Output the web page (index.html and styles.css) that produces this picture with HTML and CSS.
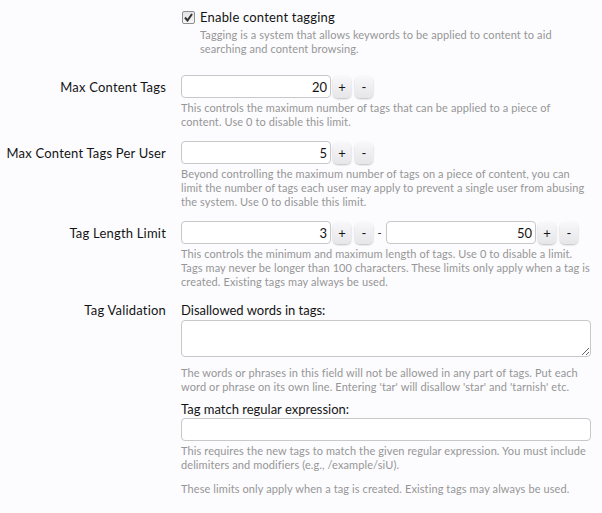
FILE: index.html
```html
<!DOCTYPE html>
<html lang="en">
<head>
    <meta charset="UTF-8">
    <title>Tagging Options</title>
    <link rel="stylesheet" href="styles.css">
</head>
<body>
    <form class="options">
        <dl class="ctrl-unit first">
            <dt></dt>
            <dd>
                <label class="check">
                    <span class="box">
                        <svg width="9" height="9" viewBox="0 0 9 9"><path d="M1 4.5 L3.5 7.5 L8 1" fill="none" stroke="#333" stroke-width="2"/></svg>
                    </span>
                    Enable content tagging
                </label>
                <p class="explain indent">Tagging is a system that allows keywords to be applied to content to aid searching and content browsing.</p>
            </dd>
        </dl>

        <dl class="ctrl-unit">
            <dt>Max Content Tags</dt>
            <dd>
                <div class="spin-row">
                    <div class="spinner">
                        <input type="text" class="text-ctrl number" value="20">
                        <button type="button" class="spin">+</button>
                        <button type="button" class="spin">-</button>
                    </div>
                </div>
                <p class="explain">This controls the maximum number of tags that can be applied to a piece of content. Use 0 to disable this limit.</p>
            </dd>
        </dl>

        <dl class="ctrl-unit">
            <dt>Max Content Tags Per User</dt>
            <dd>
                <div class="spin-row">
                    <div class="spinner">
                        <input type="text" class="text-ctrl number" value="5">
                        <button type="button" class="spin">+</button>
                        <button type="button" class="spin">-</button>
                    </div>
                </div>
                <p class="explain">Beyond controlling the maximum number of tags on a piece of content, you can limit the number of tags each user may apply to prevent a single user from abusing the system. Use 0 to disable this limit.</p>
            </dd>
        </dl>

        <dl class="ctrl-unit">
            <dt>Tag Length Limit</dt>
            <dd>
                <div class="spin-row">
                    <div class="spinner">
                        <input type="text" class="text-ctrl number" value="3">
                        <button type="button" class="spin">+</button>
                        <button type="button" class="spin">-</button>
                    </div>
                    <span class="dash">-</span>
                    <div class="spinner">
                        <input type="text" class="text-ctrl number" value="50">
                        <button type="button" class="spin">+</button>
                        <button type="button" class="spin">-</button>
                    </div>
                </div>
                <p class="explain">This controls the minimum and maximum length of tags. Use 0 to disable a limit. Tags may never be longer than 100 characters. These limits only apply when a tag is created. Existing tags may always be used.</p>
            </dd>
        </dl>

        <dl class="ctrl-unit">
            <dt class="plain">Tag Validation</dt>
            <dd>
                <div class="sub-label">Disallowed words in tags:</div>
                <textarea class="text-ctrl area"></textarea>
                <p class="explain gap">The words or phrases in this field will not be allowed in any part of tags. Put each word or phrase on its own line. Entering 'tar' will disallow 'star' and 'tarnish' etc.</p>

                <div class="sub-label second">Tag match regular expression:</div>
                <input type="text" class="text-ctrl wide">
                <p class="explain">This requires the new tags to match the given regular expression. You must include delimiters and modifiers (e.g., /example/siU).</p>

                <p class="explain last">These limits only apply when a tag is created. Existing tags may always be used.</p>
            </dd>
        </dl>
    </form>
</body>
</html>
```

FILE: styles.css
```css
body {
    margin: 0;
    background: #fcfcfe;
    font-family: 'Trebuchet MS', Lato, 'DejaVu Sans', sans-serif;
    font-size: 13px;
    color: #141414;
}

.options {
    padding: 8px 11px 0 0;
}

.ctrl-unit {
    display: grid;
    grid-template-columns: 166px 1fr;
    column-gap: 15px;
    margin: 0 0 12px 0;
}

.ctrl-unit.first {
    margin-bottom: 19px;
}

.ctrl-unit dt {
    text-align: right;
    line-height: 18px;
    padding-top: 3px;
    letter-spacing: 0.2px;
}

.ctrl-unit dt.plain {
    padding-top: 0;
}

.ctrl-unit dd {
    margin: 0;
}

.check {
    display: flex;
    align-items: center;
    gap: 5px;
    line-height: 18px;
    letter-spacing: 0.2px;
}

.box {
    box-sizing: border-box;
    width: 13px;
    height: 13px;
    margin-left: 1px;
    border: 1px solid #8e8f8f;
    border-radius: 2px;
    background: linear-gradient(#e4e4e4, #f6f6f6);
    display: flex;
    align-items: center;
    justify-content: center;
}

.box svg {
    display: block;
}

.explain {
    margin: 3px 0 0 0;
    font-size: 11px;
    line-height: 14px;
    color: #969696;
    letter-spacing: 0.1px;
}

.explain.indent {
    margin-top: 2px;
    padding-left: 19px;
}

.explain.gap {
    margin-top: 9px;
}

.explain.last {
    margin-top: 10px;
}

.spin-row {
    display: flex;
    align-items: center;
}

.spinner {
    display: flex;
    align-items: center;
    gap: 4px;
}

.text-ctrl {
    box-sizing: border-box;
    height: 23px;
    border: 1px solid #c8c8c8;
    border-radius: 4px;
    background: #fff;
    font-family: inherit;
    font-size: 13px;
    color: #141414;
    padding: 0 3px;
    margin: 0;
}

.text-ctrl.number {
    width: 150px;
    text-align: right;
    margin-right: -2px;
}

.spin {
    width: 18px;
    height: 22px;
    padding: 0;
    border: none;
    border-radius: 5px;
    background: linear-gradient(#f8f8fa, #e6e6ea);
    box-shadow: 0 1px 2px rgba(0, 0, 0, 0.25);
    font-family: inherit;
    font-size: 13px;
    color: #141414;
    cursor: pointer;
}

.dash {
    width: 13px;
    text-align: center;
    font-size: 11px;
    color: #141414;
}

.sub-label {
    line-height: 18px;
}

.sub-label.second {
    margin-top: 6px;
}

.area {
    display: block;
    width: 100%;
    height: 37px;
    margin-top: 1px;
    resize: vertical;
}

.wide {
    display: block;
    width: 100%;
    margin-top: 0;
}
```
